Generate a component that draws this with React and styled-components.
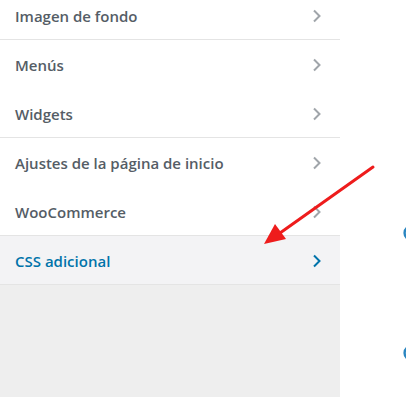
import React from "react";
import styled, { createGlobalStyle } from "styled-components";

const Global = createGlobalStyle`
  html, body { margin: 0; padding: 0; background: #ffffff; }
  body { font-family: "Open Sans", "Noto Sans", sans-serif; }
`;

const Page = styled.div`
  position: relative;
  display: flex;
  width: 406px;
  height: 397px;
  overflow: hidden;
  background: #ffffff;
`;

const Panel = styled.div`
  width: 340px;
  height: 397px;
  background: #eeeeee;
  overflow: hidden;
`;

const List = styled.ul`
  list-style: none;
  margin: -9px 0 0 0;
  padding: 0;
`;

const Row = styled.li`
  box-sizing: border-box;
  height: 49px;
  display: flex;
  align-items: center;
  justify-content: space-between;
  padding: 1px 18px 0 15px;
  background: ${(p) => (p.$active ? "#f3f3f5" : "#ffffff")};
  border-bottom: ${(p) => (p.$divider ? "1px solid #e4e4e4" : "none")};
  color: ${(p) => (p.$active ? "#0073aa" : "#555d66")};
  font-size: 15px;
  font-weight: 600;
`;

const Label = styled.span`
  line-height: 20px;
`;

const Chevron = ({ color }) => (
  <svg width="10" height="14" viewBox="0 0 10 14">
    <path d="M2 1.5 L7.5 7 L2 12.5" fill="none" stroke={color} strokeWidth="2" />
  </svg>
);

const Side = styled.div`
  flex: 1;
  position: relative;
`;

const EdgeIcon = styled.svg`
  position: absolute;
  left: 63px;
  top: ${(p) => p.$top}px;
`;

const Overlay = styled.svg`
  position: absolute;
  left: 0;
  top: 0;
  pointer-events: none;
`;

const items = [
  { label: "Imagen de fondo", divider: true },
  { label: "Menús" },
  { label: "Widgets", divider: true },
  { label: "Ajustes de la página de inicio" },
  { label: "WooCommerce", divider: true },
  { label: "CSS adicional", divider: true, active: true },
];

export default function App() {
  return (
    <>
      <Global />
      <Page>
        <Panel>
          <List>
            {items.map((it) => (
              <Row key={it.label} $divider={it.divider} $active={it.active}>
                <Label>{it.label}</Label>
                <Chevron color={it.active ? "#0073aa" : "#a0a5aa"} />
              </Row>
            ))}
          </List>
        </Panel>
        <Side>
          <EdgeIcon $top={226} width="6" height="14" viewBox="0 0 6 14">
            <path d="M5 1 A7 7 0 0 0 5 13" fill="none" stroke="#2a86c1" strokeWidth="2.5" />
          </EdgeIcon>
          <EdgeIcon $top={346} width="6" height="14" viewBox="0 0 6 14">
            <path d="M5 1 A7 7 0 0 0 5 13" fill="none" stroke="#2a86c1" strokeWidth="2.5" />
          </EdgeIcon>
        </Side>
        <Overlay width="406" height="397" viewBox="0 0 406 397">
          <line x1="373" y1="167" x2="280" y2="233" stroke="#ee1c1c" strokeWidth="3" strokeLinecap="round" />
          <polygon points="264,244 275,224 286,239" fill="#ee1c1c" />
        </Overlay>
      </Page>
    </>
  );
}
